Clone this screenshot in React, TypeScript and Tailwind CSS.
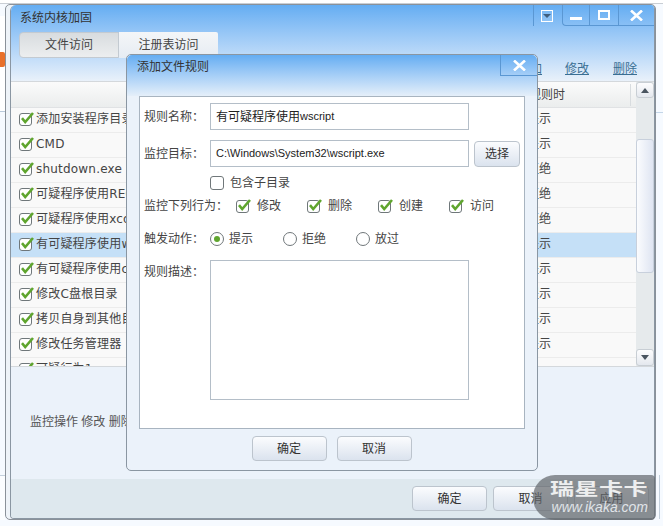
import React from 'react';

const rows = [
  { name: '添加安装程序目录', action: '提示' },
  { name: 'CMD', action: '提示' },
  { name: 'shutdown.exe', action: '拒绝' },
  { name: '可疑程序使用REG', action: '拒绝' },
  { name: '可疑程序使用xcopy', action: '拒绝' },
  { name: '有可疑程序使用wscript', action: '提示', selected: true },
  { name: '有可疑程序使用cscript', action: '提示' },
  { name: '修改C盘根目录', action: '提示' },
  { name: '拷贝自身到其他目录', action: '提示' },
  { name: '修改任务管理器', action: '提示' },
  { name: '可疑行为1', action: '一' },
];

const Check = ({ className = '' }: { className?: string }) => (
  <svg width="16" height="16" viewBox="0 0 16 16" className={`shrink-0 ${className}`}>
    <rect x="0.5" y="2.5" width="12" height="12" rx="2.5" fill="#fff" stroke="#6f777a" />
    <path d="M3 7.2 L6.2 11 L14 2" fill="none" stroke="#5fa52e" strokeWidth="2.6" />
  </svg>
);

const Radio = ({ on = false }: { on?: boolean }) => (
  <span className="w-[14px] h-[14px] rounded-full border border-[#70777a] bg-white flex items-center justify-center shrink-0">
    {on && <span className="w-[6px] h-[6px] rounded-full bg-[#5fa52e]" />}
  </span>
);

const Btn = ({ label, className = '' }: { label: string; className?: string }) => (
  <div className={`h-[25px] rounded-[4px] border border-[#bcc4cd] bg-gradient-to-b from-[#fbfcfe] to-[#dbe3ee] flex items-center justify-center text-[#333] ${className}`}>
    {label}
  </div>
);

const Behavior = ({ label }: { label: string }) => (
  <div className="w-[71px] flex items-center gap-[5px]">
    <Check />
    <span className="text-[#444]">{label}</span>
  </div>
);

const Action = ({ label, on }: { label: string; on?: boolean }) => (
  <div className="w-[73px] flex items-center gap-[5px]">
    <Radio on={on} />
    <span className="text-[#444]">{label}</span>
  </div>
);

export default function App() {
  return (
    <div className="relative w-[663px] h-[526px] overflow-hidden bg-[#f6faff] text-[12px] text-[#444] font-['Liberation_Sans','Noto_Sans_CJK_SC',sans-serif]">
      {/* page behind the window */}
      <div className="absolute left-0 right-0 top-0 h-[4px] bg-white border-b border-[#c9ced4]" />
      <div className="absolute left-0 top-[16px] w-[5px] h-[96px] bg-white border-b border-[#b9c9da]" />
      <div className="absolute left-0 top-[52px] w-[5px] h-[15px] bg-[#e8702a] rounded-r-[2px]" />
      <div className="absolute left-0 top-[475px] w-[5px] h-[45px] bg-[#fbfdff] border-t border-[#c4d0dc]" />
      <div className="absolute right-0 top-[112px] w-[8px] h-[1px] bg-[#c4d6e8]" />
      <div className="absolute left-[659px] top-[475px] w-[1px] h-[44px] bg-[#c4d0dc]" />

      {/* main window */}
      <div className="absolute left-[5px] top-[4px] w-[651px] h-[516px] rounded-[5px] border border-[#8a9199] bg-[#eef3f8] pl-[4px]">
        <div className="relative w-[645px] h-[514px] rounded-[4px] rounded-tl-[6px] border-l border-r border-b border-[#8a96a2] bg-[#ebf2fa] flex flex-col overflow-hidden">
          <div className="h-[76px] bg-gradient-to-b from-[#64adf2] to-[#e9f1fa] relative shrink-0">
            <div className="pl-[9px] text-[12px] leading-[26px] text-[#333]">系统内核加固</div>
            <div className="absolute left-[8px] top-[27px] flex h-[26px]">
              <div className="w-[100px] rounded-l-[4px] border border-[#c3cad1] bg-gradient-to-b from-[#d8dcdf] to-[#eceeef] flex items-center justify-center text-[#444]">文件访问</div>
              <div className="w-[99px] rounded-r-[2px] bg-gradient-to-b from-[#f4f6f8] to-[#e6ecf3] flex items-center justify-center text-[#444]">注册表访问</div>
            </div>
            {/* window buttons */}
            <div className="absolute right-0 top-0 flex h-[21px]">
              <div className="w-[29px] border-l border-[#5a97d3] flex items-center justify-center pr-[2px]">
                <div className="w-[12px] h-[12px] border border-white bg-white/10 flex items-center justify-center">
                  <div className="w-0 h-0 border-l-[4px] border-r-[4px] border-t-[4px] border-l-transparent border-r-transparent border-t-[#3f5f7f]" />
                </div>
              </div>
              <div className="w-[27px] border-l border-b border-[#5a97d3] rounded-bl-[4px] flex items-center justify-center">
                <div className="w-[12px] h-[3px] mt-[6px] bg-white" />
              </div>
              <div className="w-[29px] border-l border-b border-[#5a97d3] flex items-center justify-center">
                <div className="w-[12px] h-[10px] border-2 border-white" />
              </div>
              <div className="w-[36px] border-l border-b border-[#5a97d3] flex items-center justify-center">
                <svg width="13" height="11" viewBox="0 0 13 11"><path d="M1 0.5 L12 10.5 M12 0.5 L1 10.5" stroke="#fff" strokeWidth="2.6" /></svg>
              </div>
            </div>
            <div className="absolute left-[507px] top-[54px] text-[#3a6f93] underline leading-[20px]">添加</div>
            <div className="absolute left-[554px] top-[54px] text-[#3a6f93] underline leading-[20px]">修改</div>
            <div className="absolute left-[602px] top-[54px] text-[#3a6f93] underline leading-[20px]">删除</div>
          </div>

          {/* rule table */}
          <div className="h-[286px] shrink-0 flex bg-[#f9f9f9] border-t border-b border-[#d4d8dc]">
            <div className="w-[625px] shrink-0 overflow-hidden">
              <div className="relative h-[26px] bg-gradient-to-b from-[#fbfbfb] to-[#ebeded] border-b border-[#e0e2e4] flex items-center justify-end pr-[71px] text-[#444]">
                规则时
                <div className="absolute left-[619px] top-[2px] w-[1px] h-[22px] bg-[#d8dcdf]" />
              </div>
              {rows.map((r) => (
                <div key={r.name} className={`h-[25px] flex items-center justify-between border-b border-[#ececec] pl-[8px] pb-[3px] ${r.selected ? 'bg-[#c5e0f7]' : ''}`}>
                  <div className="flex items-center gap-[1px] whitespace-nowrap">
                    <Check />
                    <span className="tracking-[0.2px] font-['DejaVu_Sans','Noto_Sans_CJK_SC',sans-serif]">{r.name}</span>
                  </div>
                  <span className="mr-[85px]">{r.action}</span>
                </div>
              ))}
            </div>
            <div className="w-[18px] shrink-0 bg-[#e6eaec] flex flex-col">
              <div className="h-[16px] rounded-[3px] border border-[#c8ced4] bg-gradient-to-b from-[#fdfdfe] to-[#e4e8ee] flex items-center justify-center">
                <div className="w-0 h-0 border-l-[4px] border-r-[4px] border-b-[5px] border-l-transparent border-r-transparent border-b-[#4a5560]" />
              </div>
              <div className="mt-[41px] h-[134px] rounded-[3px] border border-[#c8d0dc] bg-gradient-to-r from-[#fbfcfe] to-[#dfe5f2]" />
              <div className="mt-auto h-[17px] rounded-[3px] border border-[#c8ced4] bg-gradient-to-b from-[#fdfdfe] to-[#e4e8ee] flex items-center justify-center">
                <div className="w-0 h-0 border-l-[4px] border-r-[4px] border-t-[5px] border-l-transparent border-r-transparent border-t-[#4a5560]" />
              </div>
            </div>
          </div>

          <div className="flex-1 pl-[19px] pt-[46px] text-[#555] leading-[18px] whitespace-nowrap">监控操作 修改 删除</div>

          {/* footer */}
          <div className="h-[39px] shrink-0 bg-[#dee8ee] flex items-center justify-end gap-[6px] pr-[5px]">
            <Btn label="确定" className="w-[75px]" />
            <Btn label="取消" className="w-[75px]" />
            <Btn label="应用" className="w-[75px]" />
          </div>
        </div>
      </div>

      {/* add-rule dialog */}
      <div className="absolute left-[126px] top-[54px] w-[412px] h-[417px] rounded-[5px] border border-[#8a96a2] bg-[#ebf2fa] flex flex-col">
        <div className="relative h-[41px] shrink-0 rounded-t-[5px] bg-gradient-to-b from-[#64adf2] to-[#e5eff9] pl-[10px] leading-[24px] text-[#333]">
          添加文件规则
          <div className="absolute right-0 top-0 w-[37px] h-[21px] border-l border-b border-[#5a97d3] flex items-center justify-center">
            <svg width="13" height="11" viewBox="0 0 13 11"><path d="M1 0.5 L12 10.5 M12 0.5 L1 10.5" stroke="#fff" strokeWidth="2.6" /></svg>
          </div>
        </div>
        <div className="mx-[12px] h-[333px] shrink-0 bg-white border border-[#a8b4c0] flex flex-col pl-[4px]">
          <div className="mt-[6px] flex items-center">
            <span className="w-[66px]">规则名称：</span>
            <div className="w-[259px] h-[27px] border border-[#b4bec8] flex items-center pl-[5px] text-[#222]">
              有可疑程序使用<span className="text-[11px]">wscript</span>
            </div>
          </div>
          <div className="mt-[10px] flex items-center">
            <span className="w-[66px]">监控目标：</span>
            <div className="w-[259px] h-[27px] border border-[#b4bec8] flex items-center pl-[5px] text-[11px] text-[#222]">C:\Windows\System32\wscript.exe</div>
            <Btn label="选择" className="ml-[5px] w-[46px] h-[26px]" />
          </div>
          <div className="mt-[8px] ml-[66px] h-[16px] flex items-center gap-[6px]">
            <span className="w-[14px] h-[14px] rounded-[3px] border border-[#70777a] bg-white shrink-0" />
            <span>包含子目录</span>
          </div>
          <div className="mt-[6px] flex items-center h-[18px]">
            <span className="w-[92px] whitespace-nowrap">监控下列行为：</span>
            <Behavior label="修改" />
            <Behavior label="删除" />
            <Behavior label="创建" />
            <Behavior label="访问" />
          </div>
          <div className="mt-[15px] flex items-center h-[18px]">
            <span className="w-[66px]">触发动作：</span>
            <Action label="提示" on />
            <Action label="拒绝" />
            <Action label="放过" />
          </div>
          <div className="mt-[12px] flex items-start">
            <span className="w-[66px] pt-[3px]">规则描述：</span>
            <div className="w-[259px] h-[140px] border border-[#b4bec8]" />
          </div>
        </div>
        <div className="flex justify-center gap-[10px] pt-[7px] pr-[1px]">
          <Btn label="确定" className="w-[75px]" />
          <Btn label="取消" className="w-[75px]" />
        </div>
      </div>

      {/* watermark */}
      <div className="absolute left-[533px] top-[475px] w-[122px] h-[45px] rounded-l-[22px] rounded-r-[4px] bg-[#63676b]/70 flex flex-col items-end pr-[7px] pt-[7px]">
        <div className="text-[24px] leading-[20px] font-bold tracking-[0.5px] text-white/85 scale-y-[0.72] origin-top whitespace-nowrap">瑞星卡卡</div>
        <div className="text-[14px] leading-[14px] -mt-[2px] italic text-[#e0e4e8] whitespace-nowrap">www.ikaka.com</div>
      </div>
    </div>
  );
}
